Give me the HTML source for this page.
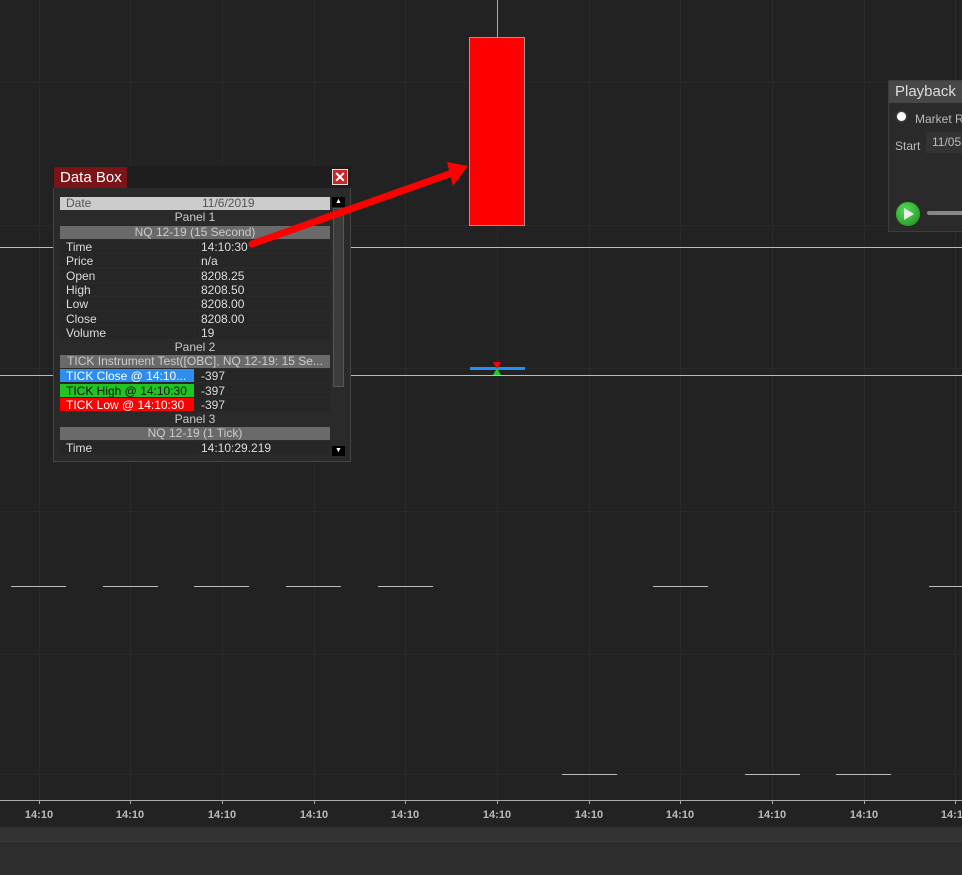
<!DOCTYPE html>
<html><head><style>
body{margin:0;width:962px;height:874px;background:#222;overflow:hidden;position:relative;font-family:"Liberation Sans",sans-serif}
.a{position:absolute;white-space:nowrap}
.vg{position:absolute;top:0;height:800px;width:1px;background:#2a2a2a}
.hg{position:absolute;left:0;width:962px;height:1px;background:#2a2a2a}
.seg{position:absolute;height:1px;background:#bbb;width:55px}
.lbl{position:absolute;top:809px;font-size:11px;font-weight:bold;color:#bbb;width:40px;text-align:center}
.tk{position:absolute;top:800px;width:1px;height:4px;background:#aaa}
.row{position:absolute;left:60px;width:270px;height:14px;font-size:12px;color:#ddd;line-height:14px;white-space:nowrap}
.row .k{position:absolute;left:0;width:134px;height:13px;background:#262626;padding-left:6px;box-sizing:border-box}
.row .v{position:absolute;left:135px;width:135px;height:13px;background:#262626;padding-left:6px;box-sizing:border-box}
.hd{position:absolute;left:60px;width:270px;height:13px;font-size:12px;line-height:13px;text-align:center;color:#ccc;white-space:nowrap;overflow:hidden}
</style></head><body>
<div class="vg" style="left:39px"></div><div class="vg" style="left:130px"></div><div class="vg" style="left:222px"></div><div class="vg" style="left:314px"></div><div class="vg" style="left:405px"></div><div class="vg" style="left:497px"></div><div class="vg" style="left:589px"></div><div class="vg" style="left:680px"></div><div class="vg" style="left:772px"></div><div class="vg" style="left:864px"></div><div class="vg" style="left:955px"></div>
<div class="hg" style="top:82px"></div><div class="hg" style="top:225px"></div><div class="hg" style="top:368px"></div><div class="hg" style="top:511px"></div><div class="hg" style="top:654px"></div><div class="hg" style="top:774px"></div>
<div class="a" style="left:0;top:247px;width:962px;height:1px;background:#bbb"></div>
<div class="a" style="left:0;top:375px;width:962px;height:1px;background:#bbb"></div>
<div class="seg" style="left:11px;top:586px"></div><div class="seg" style="left:103px;top:586px"></div><div class="seg" style="left:194px;top:586px"></div><div class="seg" style="left:286px;top:586px"></div><div class="seg" style="left:378px;top:586px"></div><div class="seg" style="left:653px;top:586px"></div><div class="seg" style="left:929px;top:586px"></div>
<div class="seg" style="left:562px;top:774px"></div><div class="seg" style="left:745px;top:774px"></div><div class="seg" style="left:836px;top:774px"></div>
<div class="a" style="left:497px;top:0;width:1px;height:38px;background:#aaa"></div>
<div class="a" style="left:469px;top:37px;width:54px;height:187px;background:#f00;border:1px solid #999"></div>
<div class="a" style="left:470px;top:367px;width:55px;height:3px;background:#1e90ff"></div>
<svg class="a" style="left:0;top:0" width="962" height="874">
<polygon points="493,362 501,362 497,369" fill="#f00"/><polygon points="493,375 501,375 497,368" fill="#2c2"/>
</svg>
<div class="a" style="left:0;top:800px;width:962px;height:1px;background:#aaa"></div>
<div class="tk" style="left:39px"></div><div class="tk" style="left:130px"></div><div class="tk" style="left:222px"></div><div class="tk" style="left:314px"></div><div class="tk" style="left:405px"></div><div class="tk" style="left:497px"></div><div class="tk" style="left:589px"></div><div class="tk" style="left:680px"></div><div class="tk" style="left:772px"></div><div class="tk" style="left:864px"></div><div class="tk" style="left:955px"></div>
<div class="lbl" style="left:19px">14:10</div><div class="lbl" style="left:110px">14:10</div><div class="lbl" style="left:202px">14:10</div><div class="lbl" style="left:294px">14:10</div><div class="lbl" style="left:385px">14:10</div><div class="lbl" style="left:477px">14:10</div><div class="lbl" style="left:569px">14:10</div><div class="lbl" style="left:660px">14:10</div><div class="lbl" style="left:752px">14:10</div><div class="lbl" style="left:844px">14:10</div><div class="lbl" style="left:935px">14:10</div>
<div class="a" style="left:0;top:827px;width:962px;height:14px;background:#333"></div>
<div class="a" style="left:0;top:841px;width:962px;height:33px;background:#2d2d2d;border-top:1px solid #3a3a3a"></div>

<div class="a" style="left:53px;top:166px;width:298px;height:296px;background:#2a2a2a;border:1px solid #444;box-sizing:border-box"></div>
<div class="a" style="left:53px;top:166px;width:298px;height:22px;background:#1e1e1e"></div>
<div class="a" style="left:54px;top:167px;width:73px;height:21px;background:#7a1418;color:#fff;font-size:15px;line-height:21px;padding-left:6px;box-sizing:border-box">Data Box</div>
<div class="a" style="left:332px;top:169px;width:16px;height:16px;background:#c82828;border:1px solid #ddd;box-sizing:border-box;color:#fff;font-size:14px;font-weight:bold;line-height:14px;text-align:center">✕</div>
<div class="a" style="left:60px;top:196px;width:270px;height:260px;background:#2a2a2a"></div>
<div class="hd" style="top:197px;background:#ccc;color:#555;text-align:left"><span style="padding-left:6px">Date</span><span style="position:absolute;left:142px">11/6/2019</span></div>
<div class="hd" style="top:211px">Panel 1</div>
<div class="hd" style="top:226px;background:#6a6a6a">NQ 12-19 (15 Second)</div>
<div class="row" style="top:240px"><div class="k">Time</div><div class="v">14:10:30</div></div>
<div class="row" style="top:254px"><div class="k">Price</div><div class="v">n/a</div></div>
<div class="row" style="top:269px"><div class="k">Open</div><div class="v">8208.25</div></div>
<div class="row" style="top:283px"><div class="k">High</div><div class="v">8208.50</div></div>
<div class="row" style="top:297px"><div class="k">Low</div><div class="v">8208.00</div></div>
<div class="row" style="top:312px"><div class="k">Close</div><div class="v">8208.00</div></div>
<div class="row" style="top:326px"><div class="k">Volume</div><div class="v">19</div></div>
<div class="hd" style="top:341px">Panel 2</div>
<div class="hd" style="top:355px;background:#6a6a6a">TICK Instrument Test([OBC], NQ 12-19: 15 Se...</div>
<div class="row" style="top:369px"><div class="k" style="background:#2d8ef0;color:#fff">TICK Close @ 14:10...</div><div class="v">-397</div></div>
<div class="row" style="top:384px"><div class="k" style="background:#22c422;color:#111">TICK High @ 14:10:30</div><div class="v">-397</div></div>
<div class="row" style="top:398px"><div class="k" style="background:#f00;color:#fff">TICK Low @ 14:10:30</div><div class="v">-397</div></div>
<div class="hd" style="top:413px">Panel 3</div>
<div class="hd" style="top:427px;background:#6a6a6a">NQ 12-19 (1 Tick)</div>
<div class="row" style="top:441px"><div class="k">Time</div><div class="v">14:10:29.219</div></div>
<div class="a" style="left:331px;top:196px;width:15px;height:260px;background:#2a2a2a"></div>
<div class="a" style="left:332px;top:197px;width:13px;height:10px;background:#000;color:#fff;font-size:7px;text-align:center;line-height:10px">▲</div>
<div class="a" style="left:333px;top:208px;width:11px;height:179px;background:#3c3c3c;border:1px solid #555;box-sizing:border-box"></div>
<div class="a" style="left:332px;top:446px;width:13px;height:10px;background:#000;color:#fff;font-size:7px;text-align:center;line-height:10px">▼</div>

<svg class="a" style="left:0;top:0" width="962" height="874">
<line x1="252" y1="244" x2="455" y2="172" stroke="#f00" stroke-width="7" stroke-linecap="round"/>
<polygon points="447,162 468,166 453,186" fill="#f00"/>
</svg>

<div class="a" style="left:888px;top:80px;width:80px;height:152px;background:#2a2a2a;border:1px solid #3d3d3d;box-sizing:border-box"></div>
<div class="a" style="left:889px;top:81px;width:80px;height:22px;background:#474747;color:#ddd;font-size:15px;line-height:22px;padding-left:6px;box-sizing:border-box">Playback</div>
<div class="a" style="left:897px;top:112px;width:9px;height:9px;border-radius:50%;background:#fff;box-shadow:0 0 2px #888"></div>
<div class="a" style="left:915px;top:112px;font-size:12px;color:#bbb">Market R</div>
<div class="a" style="left:895px;top:139px;font-size:12px;color:#bbb">Start</div>
<div class="a" style="left:926px;top:132px;width:40px;height:21px;background:#333;font-size:12px;color:#bbb;line-height:21px;padding-left:6px;box-sizing:border-box">11/05</div>
<div class="a" style="left:896px;top:202px;width:24px;height:24px;border-radius:50%;background:radial-gradient(circle at 40% 35%,#5d5,#1a8a1a)"></div>
<svg class="a" style="left:903px;top:207px" width="12" height="14"><polygon points="1,1 11,7 1,13" fill="#eee"/></svg>
<div class="a" style="left:927px;top:211px;width:40px;height:4px;background:#888;border-radius:2px"></div>
</body></html>
